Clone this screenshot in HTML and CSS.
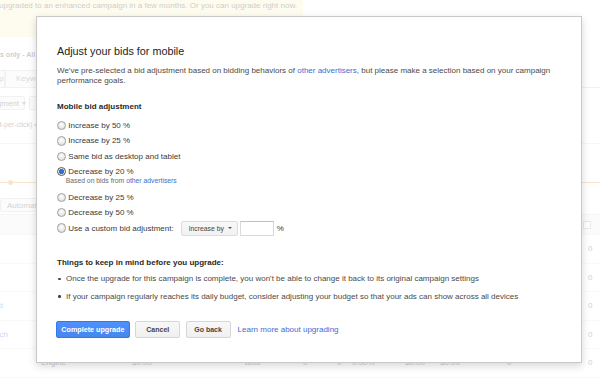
FILE: index.html
```html
<!DOCTYPE html>
<html>
<head>
<meta charset="utf-8">
<title>Adjust your bids for mobile</title>
<link rel="stylesheet" href="styles.css">
</head>
<body>
<div class="page">
  <div class="bg">
    <div class="notice"><span class="notice-text">upgraded to an enhanced campaign in a few months. Or you can upgrade right now.</span></div>
    <div class="crumb"><span class="crumb-text">Networks only - All features</span></div>
    <div class="tabs"><span class="tab tab-first">Ad groups</span><span class="tab">Keywords</span></div>
    <div class="tools"><span class="tbtn tbtn-seg">Segment <i class="caret"></i></span><span class="tbtn">Filter <i class="caret"></i></span></div>
    <div class="metric"><span class="metric-text">Avg. CPC (cost-per-click) <i class="caret"></i></span></div>
    <div class="chart"><div class="chart-line"></div></div>
    <div class="tools2"><span class="tbtn tbtn-auto">Automate <i class="caret"></i></span></div>
    <div class="thead"><span class="hbox"></span></div>
    <div class="row"><span class="cell-name"></span><span></span><span></span><span></span><span></span><span></span><span></span><span></span><span></span><span></span><span>0</span></div>
    <div class="row"><span class="cell-name"></span><span></span><span></span><span></span><span></span><span></span><span></span><span></span><span></span><span></span><span>0</span></div>
    <div class="row"><span class="cell-name name-a">Display Select Test</span><span></span><span></span><span></span><span></span><span></span><span></span><span></span><span></span><span></span><span>0</span></div>
    <div class="row"><span class="cell-name name-b">Google Search</span><span></span><span></span><span></span><span></span><span></span><span></span><span></span><span></span><span></span><span>0</span></div>
    <div class="row"><span class="cell-name"></span><span>Engine</span><span>$0.00</span><span>auto</span><span>0</span><span>0</span><span>0.00%</span><span>$0.00</span><span>$0.00</span><span>0</span><span>0</span></div>
  </div>
  <div class="scrim"></div>
  <div class="dialog">
    <h1 class="title">Adjust your bids for mobile</h1>
    <p class="intro">We've pre-selected a bid adjustment based on bidding behaviors of <a class="link">other advertisers</a>, but please make a selection based on your campaign performance goals.</p>
    <h2 class="label">Mobile bid adjustment</h2>
    <div class="options">
      <div class="opt"><span class="radio"></span>Increase by 50 %</div>
      <div class="opt"><span class="radio"></span>Increase by 25 %</div>
      <div class="opt"><span class="radio"></span>Same bid as desktop and tablet</div>
      <div class="opt-group">
        <div class="opt"><span class="radio radio-on"></span>Decrease by 20 %</div>
        <div class="hint">Based on bids from <a class="link">other advertisers</a></div>
      </div>
      <div class="opt"><span class="radio"></span>Decrease by 25 %</div>
      <div class="opt"><span class="radio"></span>Decrease by 50 %</div>
      <div class="opt"><span class="radio"></span>Use a custom bid adjustment:<span class="sel">Increase by <i class="caret-sm"></i></span><span class="field"></span><span class="pct">%</span></div>
    </div>
    <h2 class="label label-notes">Things to keep in mind before you upgrade:</h2>
    <ul class="notes">
      <li>Once the upgrade for this campaign is complete, you won't be able to change it back to its original campaign settings</li>
      <li>If your campaign regularly reaches its daily budget, consider adjusting your budget so that your ads can show across all devices</li>
    </ul>
    <div class="actions">
      <span class="btn btn-primary">Complete upgrade</span>
      <span class="btn">Cancel</span>
      <span class="btn">Go back</span>
      <a class="link learn">Learn more about upgrading</a>
    </div>
  </div>
</div>
</body>
</html>
```
FILE: styles.css
```css
* { box-sizing: border-box; }
html, body { margin: 0; padding: 0; }
body {
  font-family: "Liberation Sans", Arial, sans-serif;
  font-size: 8px;
  color: #222;
  background: #fff;
}
.page { position: relative; width: 600px; height: 381px; overflow: hidden; }

/* background page */
.bg { width: 600px; }
.notice {
  width: 303px; height: 37px; background: #f9edbe;
  padding-top: 1px; line-height: 10px; white-space: nowrap; overflow: hidden; color: #333;
}
.notice-text { margin-left: -1px; }
.crumb { margin-top: 13px; height: 10px; line-height: 10px; font-size: 7px; font-weight: bold; white-space: nowrap; overflow: hidden; color: #333; }
.crumb-text { display: inline-block; margin-left: -27.6px; }
.tabs { margin-top: 10px; height: 18px; border-bottom: 1px solid #ccc; display: flex; }
.tab {
  height: 17px; border: 1px solid #ccc; border-bottom: 0; background: #f1f1f1;
  padding: 0 10px; line-height: 16px; color: #666; white-space: nowrap;
}
.tab-first { margin-left: -40px; width: 45px; overflow: hidden; }
.tools { margin-top: 8px; height: 14px; display: flex; gap: 4px; }
.tbtn {
  height: 14px; border: 1px solid #c6c6c6; background: #f3f3f3; border-radius: 2px;
  padding: 0 6px; color: #444; white-space: nowrap; display: flex; align-items: center; gap: 3px;
}
.tbtn-seg { margin-left: -20px; width: 45px; }
.caret { display: inline-block; width: 0; height: 0; border-left: 2.5px solid transparent; border-right: 2.5px solid transparent; border-top: 3px solid #666; }
.metric { margin-top: 10px; height: 10px; line-height: 10px; font-size: 7px; white-space: nowrap; color: #444; }
.metric-text { display: inline-block; margin-left: -46px; }
.chart { margin-top: 13px; height: 47px; border-top: 1px solid #ddd; padding-top: 37.5px; }
.chart-line { position: relative; height: 1px; background: #e69138; }
.chart-line::after {
  content: ""; position: absolute; left: 8px; top: -2px; width: 5px; height: 5px;
  border-radius: 50%; background: #e69138;
}
.tools2 { margin-top: 8px; height: 14px; display: flex; }
.tbtn-auto { margin-left: 0; }
.thead {
  margin-top: 2px; height: 21px; background: #eee; border-top: 1px solid #ddd; border-bottom: 1px solid #ddd;
  display: flex; justify-content: flex-end; align-items: center; padding-right: 9px;
}
.hbox { width: 8px; height: 8px; border: 1px solid #aaa; background: #fff; }
.row {
  height: 28.5px; display: grid;
  grid-template-columns: 41px 91px 113px 58px 34px 15px 53px 35px 67px 81px 1fr;
  align-items: center; border-bottom: 1px solid #e8e8e8; white-space: nowrap; color: #333;
}
.cell-name { overflow: hidden; display: flex; justify-content: flex-end; color: #15c; }
.name-a { padding-right: 38px; }
.name-b { padding-right: 33px; }

.scrim { position: absolute; inset: 0; background: rgba(255, 255, 255, 0.75); }

/* dialog */
.dialog {
  position: absolute; left: 36px; top: 16px; width: 546px; height: 347px;
  background: #fff; border: 1px solid #c8c8c8; box-shadow: 0 3px 8px rgba(0, 0, 0, 0.16);
  padding: 28px 20px 0; color: #444;
}
.title { margin: 0; font-size: 10.8px; line-height: 13px; font-weight: normal; color: #222; }
.intro { margin: 8px 0 0; line-height: 10px; color: #4a4a4a; }
.link { color: #3b6ed4; text-decoration: none; }
.label { margin: 16px 0 0; font-size: 8px; line-height: 10px; font-weight: bold; color: #2a2a2a; }
.options { margin-top: 6px; color: #3a3a3a; }
.opt { display: flex; align-items: center; height: 15.3px; white-space: nowrap; }
.radio {
  flex: none; width: 9.3px; height: 9.3px; border-radius: 50%; border: 1px solid #a0a0a0;
  background: radial-gradient(circle at 50% 40%, #fff, #d8d8d8); margin-right: 2px;
}
.radio-on { border-color: #555; background: radial-gradient(circle, #2f6fd6 0 2.4px, #eef0f3 2.9px); }
.hint { margin: -2.3px 0 5px 8.7px; font-size: 6.8px; line-height: 8px; color: #6a6a6a; white-space: nowrap; }
.sel {
  margin-left: 7px; height: 15px; width: 57px; display: flex; align-items: center; gap: 4px; padding-left: 7px;
  border: 1px solid #dcdcdc; border-radius: 2px; background: linear-gradient(#f8f8f8, #f1f1f1);
  font-size: 6.8px; color: #444;
}
.caret-sm { display: inline-block; width: 0; height: 0; border-left: 2px solid transparent; border-right: 2px solid transparent; border-top: 2.5px solid #555; }
.field { margin-left: 2.5px; width: 34px; height: 15px; border: 1px solid #d9d9d9; border-top-color: #c0c0c0; background: #fff; }
.pct { margin-left: 2.5px; }
.label-notes { margin-top: 22px; }
.notes { list-style: none; margin: 6px 0 0; padding: 0; color: #4a4a4a; line-height: 10px; }
.notes li { display: flex; align-items: center; white-space: nowrap; }
.notes li + li { margin-top: 7.8px; }
.notes li::before {
  content: ""; flex: none; width: 2.5px; height: 2.5px; border-radius: 50%; background: #444; margin: 0 5.5px 0 1px;
}
.actions { margin: 19px 0 0 -1.3px; display: flex; align-items: center; gap: 5.3px; }
.btn {
  height: 17.5px; width: 45px; display: flex; align-items: center; justify-content: center;
  border: 1px solid #d6d6d6; border-radius: 2px; background: linear-gradient(#f8f8f8, #f0f0f0);
  color: #444; font-weight: bold; font-size: 7px; white-space: nowrap;
}
.btn-primary { width: 74.3px; background: linear-gradient(#4d90fe, #4787ed); border-color: #3079ed; color: #fff; font-size: 7.2px; }
.learn { margin-left: 1.7px; }
```
